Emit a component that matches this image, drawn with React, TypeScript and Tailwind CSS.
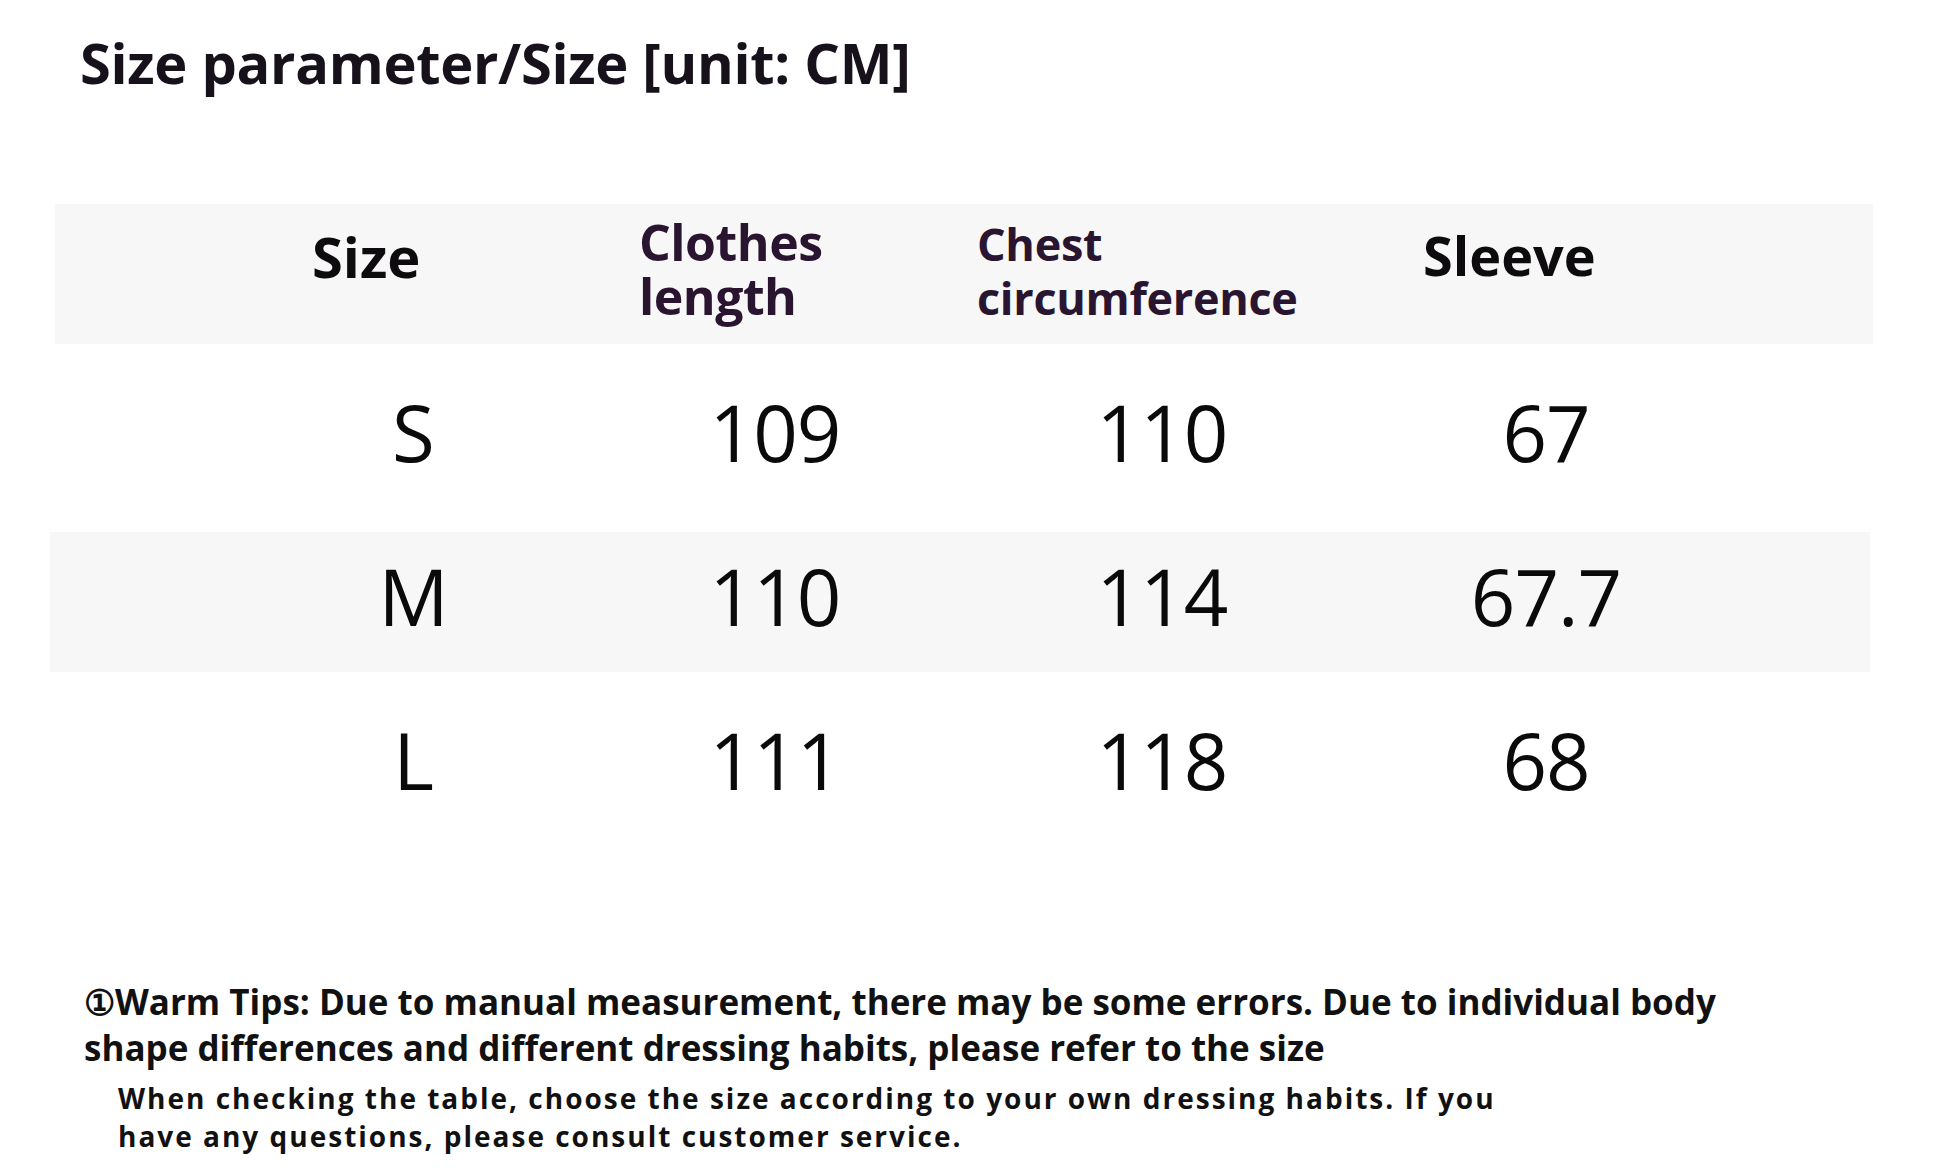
import React from "react";

const rows = [
  { size: "S", length: "109", chest: "110", sleeve: "67", band: false },
  { size: "M", length: "110", chest: "114", sleeve: "67.7", band: true },
  { size: "L", length: "111", chest: "118", sleeve: "68", band: false },
];

export default function App() {
  return (
    <div className="w-[1946px] h-[1173px] bg-white overflow-hidden font-['Open_Sans','Noto_Sans',sans-serif] text-[#111]">
      <h1 className="pl-[80px] pt-[34px] text-[56px] leading-none font-bold text-[#17111b] tracking-[-0.3px]">
        Size parameter/Size [unit: CM]
      </h1>

      <div className="mt-[114px] flex flex-col gap-[24px]">
        <div className="ml-[55px] w-[1818px] h-[140px] bg-[#f7f7f7] flex items-start">
          <div className="w-[584px] pl-[257px] pt-[24px] text-[56px] leading-none font-bold text-[#0d0b0e]">
            Size
          </div>
          <div className="w-[338px] pt-[11px] text-[50px] leading-[54px] font-bold text-[#2a1530] tracking-[-0.5px]">
            Clothes
            <br />
            length
          </div>
          <div className="w-[446px] pt-[13px] text-[45px] leading-[54px] font-bold text-[#2a1530] tracking-[-0.3px]">
            Chest
            <br />
            circumference
          </div>
          <div className="pt-[24px] text-[54px] leading-none font-bold text-[#0d0b0e]">
            Sleeve
          </div>
        </div>

        {rows.map((r) => (
          <div
            key={r.size}
            className={
              r.band
                ? "ml-[50px] w-[1820px] h-[140px] bg-[#f7f7f7] flex items-center pb-[12px] text-[78px] leading-none text-[#0a0a0a] tracking-[-1px]"
                : "ml-[50px] w-[1820px] h-[140px] flex items-center pb-[12px] text-[78px] leading-none text-[#0a0a0a] tracking-[-1px]"
            }
          >
            <div className="ml-[243px] w-[240px] text-center">{r.size}</div>
            <div className="ml-[122px] w-[240px] text-center">{r.length}</div>
            <div className="ml-[147px] w-[240px] text-center">{r.chest}</div>
            <div className="ml-[144px] w-[240px] text-center">{r.sleeve}</div>
          </div>
        ))}
      </div>

      <div className="mt-[143px] pl-[84px] text-[35px] leading-[46px] font-bold text-[#111]">
        <p>①Warm Tips: Due to manual measurement, there may be some errors. Due to individual body</p>
        <p>shape differences and different dressing habits, please refer to the size</p>
      </div>
      <div className="mt-[8px] pl-[118px] text-[28px] leading-[38px] font-bold text-[#111] tracking-[2px]">
        <p>When checking the table, choose the size according to your own dressing habits. If you</p>
        <p>have any questions, please consult customer service.</p>
      </div>
    </div>
  );
}
